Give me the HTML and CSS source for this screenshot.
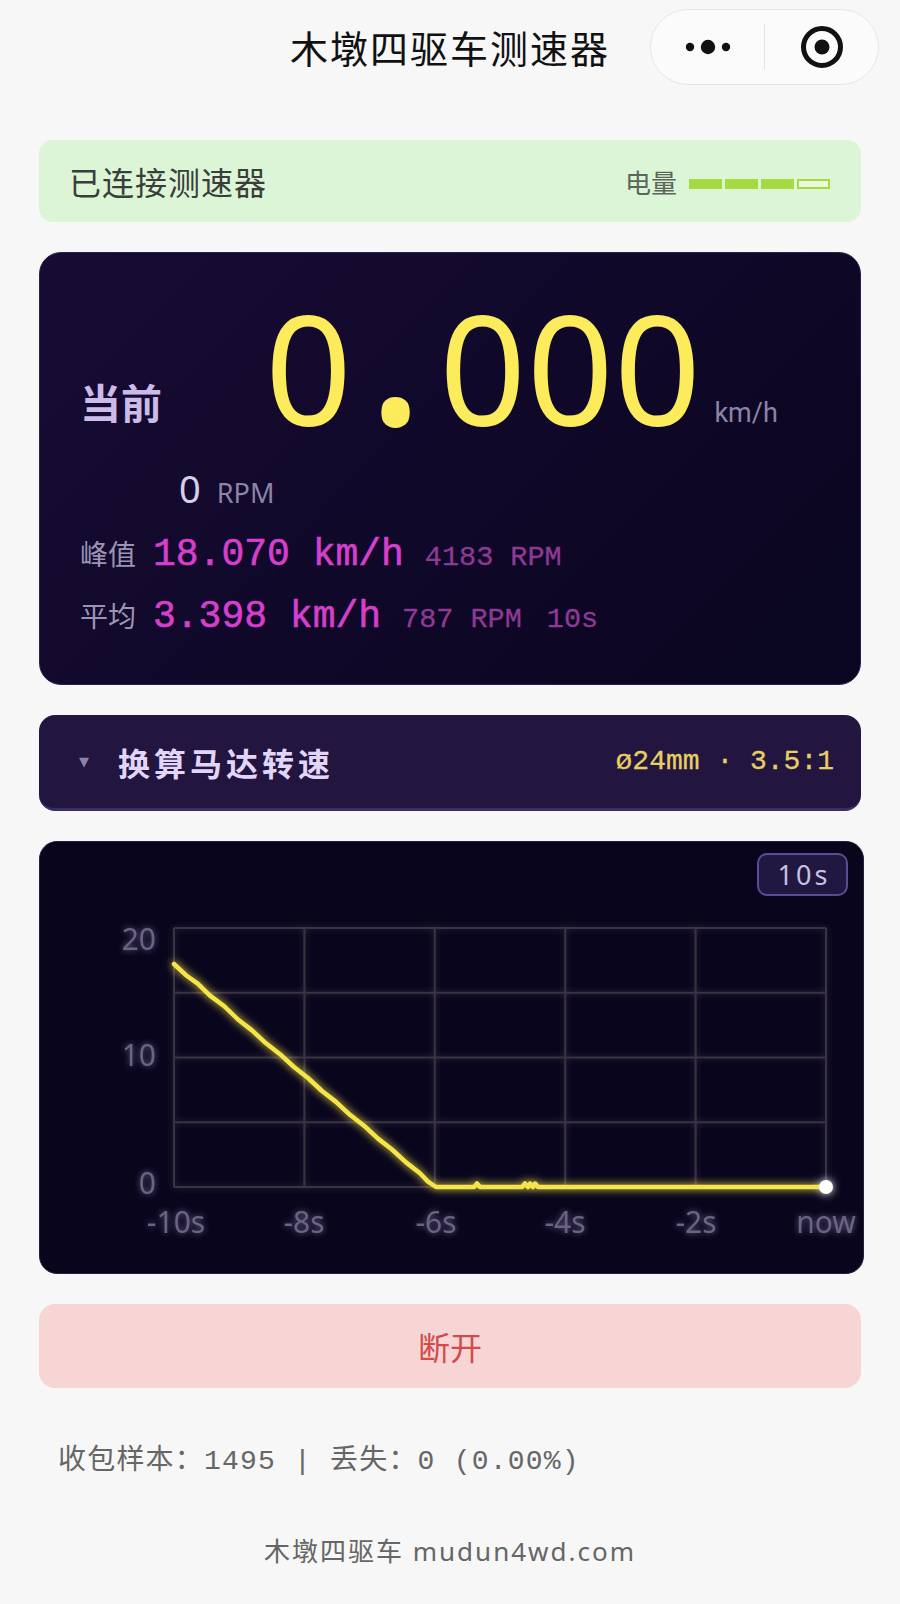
FILE: index.html
```html
<!DOCTYPE html>
<html lang="zh-CN">
<head>
<meta charset="utf-8">
<title>木墩四驱车测速器</title>
<link rel="stylesheet" href="styles.css">
</head>
<body>
<header class="nav">
  <h1 class="nav-title">木墩四驱车测速器</h1>
  <div class="capsule">
    <div class="capsule-btn">
      <svg width="46" height="20" viewBox="0 0 46 20"><circle cx="5" cy="10" r="4.2" fill="#111"/><circle cx="23" cy="10" r="7.2" fill="#111"/><circle cx="41" cy="10" r="4.2" fill="#111"/></svg>
    </div>
    <div class="capsule-sep"></div>
    <div class="capsule-btn">
      <svg width="46" height="46" viewBox="0 0 46 46"><circle cx="23" cy="23" r="18.5" fill="none" stroke="#111" stroke-width="5"/><circle cx="23" cy="23" r="7.5" fill="#111"/></svg>
    </div>
  </div>
</header>

<main class="page">
  <section class="status">
    <span class="status-text">已连接测速器</span>
    <span class="battery">
      <span class="battery-label">电量</span>
      <span class="bars"><i class="bar on"></i><i class="bar on"></i><i class="bar on"></i><i class="bar"></i></span>
    </span>
  </section>

  <section class="speed-card">
    <div class="cur-row"><span class="cur-label">当前</span><span class="cur-value">0<span class="dot">.</span>000</span><span class="cur-unit">km/h</span></div>
    <div class="rpm-row"><span class="rpm-value">0</span><span class="rpm-unit">RPM</span></div>
    <div class="stat-row"><span class="stat-label">峰值</span><span class="stat-value">18.070 km/h</span><span class="stat-sub">4183 RPM</span></div>
    <div class="stat-row"><span class="stat-label">平均</span><span class="stat-value">3.398 km/h</span><span class="stat-sub">787 RPM</span><span class="stat-sub win">10s</span></div>
  </section>

  <section class="panel">
    <div class="panel-left"><span class="caret">▼</span><span class="panel-title">换算马达转速</span></div>
    <span class="panel-info">ø24mm · 3.5:1</span>
  </section>

  <section class="chart-card">
    <div class="chart-head"><span class="range-btn">10s</span></div>
    <svg class="chart" width="824" height="374" viewBox="0 0 824 374">
      <defs>
        <filter id="glowGrid" x="-10%" y="-10%" width="120%" height="120%">
          <feGaussianBlur stdDeviation="3" result="b"/>
          <feMerge><feMergeNode in="b"/><feMergeNode in="SourceGraphic"/></feMerge>
        </filter>
        <filter id="glowLine" x="-10%" y="-20%" width="120%" height="140%">
          <feGaussianBlur stdDeviation="4" result="b"/>
          <feMerge><feMergeNode in="b"/><feMergeNode in="SourceGraphic"/></feMerge>
        </filter>
        <filter id="glowText" x="-30%" y="-30%" width="160%" height="160%">
          <feGaussianBlur stdDeviation="3" result="b"/>
          <feMerge><feMergeNode in="b"/><feMergeNode in="SourceGraphic"/></feMerge>
        </filter>
      </defs>
      <g filter="url(#glowGrid)" stroke="#3b3243" stroke-width="2" fill="none">
        <path d="M134 32H786M134 96.75H786M134 161.5H786M134 226.25H786M134 291H786"/>
        <path d="M134 32V291M264.4 32V291M394.8 32V291M525.2 32V291M655.6 32V291M786 32V291"/>
      </g>
      <g class="axis" filter="url(#glowText)">
        <text x="116" y="54" text-anchor="end">20</text>
        <text x="116" y="170" text-anchor="end">10</text>
        <text x="116" y="298" text-anchor="end">0</text>
        <text x="136" y="337" text-anchor="middle">-10s</text>
        <text x="264" y="337" text-anchor="middle">-8s</text>
        <text x="396" y="337" text-anchor="middle">-6s</text>
        <text x="525" y="337" text-anchor="middle">-4s</text>
        <text x="656" y="337" text-anchor="middle">-2s</text>
        <text x="786" y="337" text-anchor="middle">now</text>
      </g>
      <g filter="url(#glowLine)">
        <polyline fill="none" stroke="#f6e54a" stroke-width="4.5" stroke-linejoin="round" stroke-linecap="round"
          points="134,68 146,79.2 158,87.9 170,99.6 184,110 198,123.5 212,134.4 226,147.3 240,158.2 254,171 268,182 282,195 296,205.9 310,218.8 324,229.7 338,242.6 352,253.5 366,266.4 380,277.3 388,285.6 396,291 434,291 437,287.5 440,291 482,291 485,287.5 488,291 490,287.5 493,291 495,287.5 498,291 786,291"/>
        <circle cx="786" cy="291" r="7" fill="#ffffff"/>
      </g>
    </svg>
  </section>

  <button class="disconnect" type="button">断开</button>

  <p class="stats">收包样本：1495 | 丢失：0 (0.00%)</p>

  <footer class="footer">木墩四驱车 mudun4wd.com</footer>
</main>
</body>
</html>
```

FILE: styles.css
```css
* { box-sizing: border-box; }

html, body {
  margin: 0;
  padding: 0;
  background: #f7f7f7;
}

body {
  width: 900px;
  font-family: "Noto Sans", "Noto Sans CJK SC", sans-serif;
  color: #333;
}

/* ---------- nav ---------- */
.nav {
  position: relative;
  height: 94px;
  display: flex;
  align-items: center;
  justify-content: center;
}

.nav-title {
  margin: 0;
  font-family: "Noto Sans CJK SC", sans-serif;
  font-size: 38px;
  font-weight: 400;
  letter-spacing: 2px;
  color: #111;
  line-height: 1;
}

.capsule {
  position: absolute;
  top: 9px;
  right: 21px;
  width: 229px;
  height: 76px;
  border: 1.5px solid #e6e6e6;
  border-radius: 38px;
  background: #fbfbfb;
  display: flex;
  align-items: center;
}

.capsule-btn {
  flex: 1;
  display: flex;
  align-items: center;
  justify-content: center;
}

.capsule-sep {
  width: 1px;
  height: 46px;
  background: #e2e2e2;
}

/* ---------- page ---------- */
.page {
  padding: 46px 39px 0;
  display: flex;
  flex-direction: column;
  gap: 30px;
}

/* ---------- status ---------- */
.status {
  height: 82px;
  border-radius: 14px;
  background: #dbf5d6;
  padding: 0 31px 0 30px;
  display: flex;
  align-items: center;
  justify-content: space-between;
}

.status-text {
  font-family: "Noto Sans CJK SC", sans-serif;
  font-size: 32px;
  letter-spacing: 1px;
  color: #3a3d3a;
}

.battery {
  display: flex;
  align-items: center;
  gap: 12px;
}

.battery-label {
  font-family: "Noto Sans CJK SC", sans-serif;
  font-size: 26px;
  color: #5b675b;
}

.bars {
  display: flex;
  gap: 3px;
  margin-top: 6px;
}

.bar {
  display: block;
  width: 33px;
  height: 10px;
  border: 2px solid #a6da43;
  background: #eaf8dc;
}

.bar.on {
  background: #a6da43;
}

/* ---------- speed card ---------- */
.speed-card {
  height: 433px;
  border-radius: 22px;
  border: 1px solid #2a2150;
  background: linear-gradient(135deg, #180c35 0%, #0f0828 55%, #0a0520 100%);
  padding: 38px 0 0 40px;
  display: flex;
  flex-direction: column;
}

.cur-row {
  line-height: 1;
  white-space: nowrap;
}

.cur-label {
  display: inline-block;
  width: 185px;
  font-family: "Noto Sans CJK SC", sans-serif;
  font-weight: 700;
  font-size: 41px;
  line-height: 1;
  color: #cbbbe9;
  vertical-align: 6px;
}

.cur-value {
  display: inline-block;
  font-family: "Noto Sans", sans-serif;
  font-size: 152px;
  line-height: 1;
  letter-spacing: 0.4px;
  font-variant-numeric: tabular-nums;
  color: #fcec5c;
}

.dot {
  display: inline-block;
  width: 87px;
  text-align: center;
  letter-spacing: 0;
  transform: scale(1.5);
  transform-origin: 50% 88.8%;
}

.cur-unit {
  display: inline-block;
  margin-left: 13px;
  font-family: Roboto, "Noto Sans", sans-serif;
  font-size: 27px;
  line-height: 1;
  color: #8c83a6;
  vertical-align: 3px;
}

.rpm-row {
  margin-top: 22px;
  padding-left: 99px;
  display: flex;
  align-items: baseline;
  line-height: 46px;
}

.rpm-value {
  font-family: "Noto Sans", sans-serif;
  font-size: 38px;
  color: #d6ceeb;
}

.rpm-unit {
  margin-left: 16px;
  font-family: "Noto Sans", sans-serif;
  font-size: 27px;
  color: #8d84a6;
}

.stat-row {
  margin-top: 14px;
  display: flex;
  align-items: baseline;
  line-height: 46px;
}

.stat-row + .stat-row {
  margin-top: 11px;
}

.stat-label {
  font-family: "Noto Sans CJK SC", sans-serif;
  font-size: 28px;
  color: #9d94b5;
}

.stat-value {
  margin-left: 17px;
  font-family: "Liberation Mono", monospace;
  font-size: 38px;
  color: #d63fcb;
  -webkit-text-stroke: 0.6px #d63fcb;
}

.stat-sub {
  margin-left: 21px;
  font-family: "Liberation Mono", monospace;
  font-size: 28.5px;
  color: #8e3a94;
  -webkit-text-stroke: 0.3px #8e3a94;
}

.stat-sub.win {
  margin-left: 25px;
}

/* ---------- motor panel ---------- */
.panel {
  height: 96px;
  border-radius: 16px;
  background: #22153f;
  border-bottom: 3px solid #3a2d62;
  padding: 0 27px 0 40px;
  display: flex;
  align-items: center;
  justify-content: space-between;
}

.panel-left {
  display: flex;
  align-items: center;
}

.caret {
  font-family: "DejaVu Sans", sans-serif;
  font-size: 13px;
  color: #8c82aa;
}

.panel-title {
  margin-left: 29px;
  font-family: "Noto Sans CJK SC", sans-serif;
  font-weight: 700;
  font-size: 32px;
  letter-spacing: 4px;
  color: #e2d6f8;
}

.panel-info {
  font-family: "Liberation Mono", monospace;
  font-size: 28px;
  color: #e7cf62;
  -webkit-text-stroke: 0.3px #e7cf62;
}

/* ---------- chart ---------- */
.chart-card {
  margin-right: -3px;
  height: 433px;
  border-radius: 18px;
  border: 1px solid #26203f;
  background: #08051d;
  display: flex;
  flex-direction: column;
  overflow: hidden;
}

.chart-head {
  display: flex;
  justify-content: flex-end;
  padding: 11px 15px 0 0;
}

.range-btn {
  width: 91px;
  height: 43px;
  border: 2px solid #5b4b93;
  border-radius: 10px;
  background: #211841;
  color: #c9c0e2;
  font-family: "Noto Sans", sans-serif;
  font-size: 27px;
  letter-spacing: 3px;
  display: flex;
  align-items: center;
  justify-content: center;
  padding-left: 3px;
}

.chart {
  display: block;
}

.axis text {
  font-family: "Noto Sans", sans-serif;
  font-size: 30px;
  fill: #6c6384;
}

/* ---------- bottom ---------- */
.disconnect {
  height: 84px;
  border: none;
  border-radius: 16px;
  background: #f8d5d5;
  color: #d24b4b;
  font-family: "Noto Sans CJK SC", sans-serif;
  font-size: 32px;
  padding: 0;
}

.stats {
  margin: 26px 0 0;
  padding-left: 19px;
  font-family: "Liberation Mono", "Noto Sans CJK SC", monospace;
  font-size: 28px;
  letter-spacing: 1.2px;
  line-height: 36px;
  color: #666;
  white-space: pre;
}

.footer {
  margin-top: 23px;
  text-align: center;
  font-family: "Noto Sans", "Noto Sans CJK SC", sans-serif;
  font-size: 26px;
  letter-spacing: 2px;
  line-height: 36px;
  color: #666;
}
```
